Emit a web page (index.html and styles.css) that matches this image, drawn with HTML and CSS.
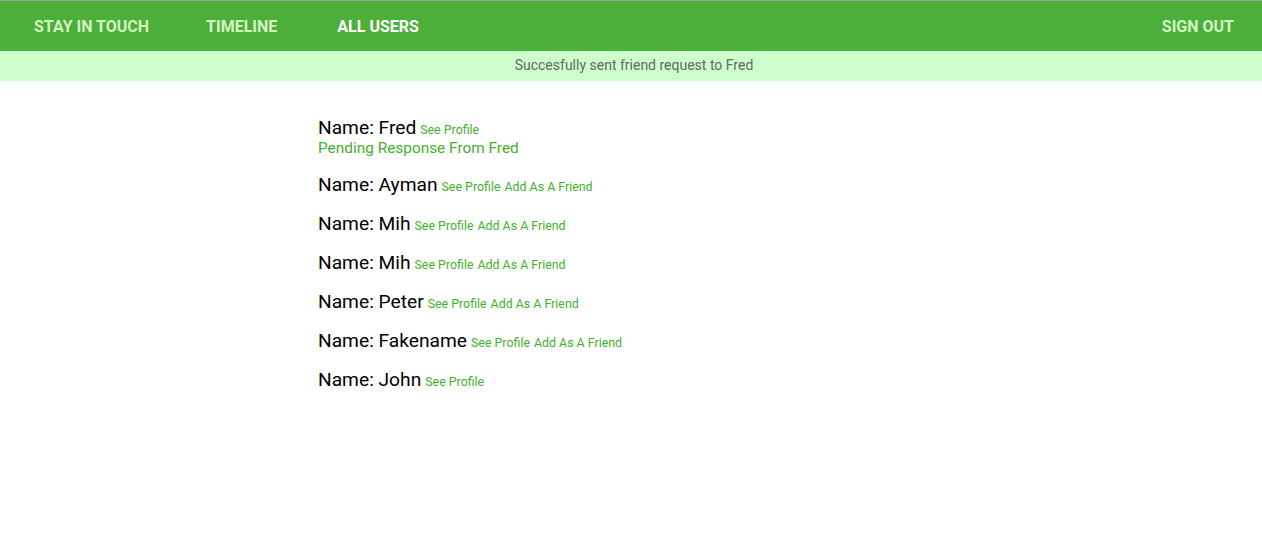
FILE: index.html
```html
<!DOCTYPE html>
<html>
<head>
<meta charset="utf-8">
<link rel="stylesheet" href="styles.css">
</head>
<body>
<div class="topline"></div>
<nav class="nav">
  <div class="nav-left">
    <a class="nav-link">STAY IN TOUCH</a>
    <a class="nav-link nav-link-wide">TIMELINE</a>
    <a class="nav-link active">ALL USERS</a>
  </div>
  <a class="nav-link">SIGN OUT</a>
</nav>
<div class="notice">Succesfully sent friend request to Fred</div>
<main class="users">
  <div class="user">
    <div class="user-line"><span class="name">Name: Fred</span> <a class="link">See Profile</a></div>
    <div class="pending">Pending Response From Fred</div>
  </div>
  <div class="user">
    <div class="user-line"><span class="name">Name: Ayman</span> <a class="link">See Profile</a> <a class="link">Add As A Friend</a></div>
  </div>
  <div class="user">
    <div class="user-line"><span class="name">Name: Mih</span> <a class="link">See Profile</a> <a class="link">Add As A Friend</a></div>
  </div>
  <div class="user">
    <div class="user-line"><span class="name">Name: Mih</span> <a class="link">See Profile</a> <a class="link">Add As A Friend</a></div>
  </div>
  <div class="user">
    <div class="user-line"><span class="name">Name: Peter</span> <a class="link">See Profile</a> <a class="link">Add As A Friend</a></div>
  </div>
  <div class="user">
    <div class="user-line"><span class="name">Name: Fakename</span> <a class="link">See Profile</a> <a class="link">Add As A Friend</a></div>
  </div>
  <div class="user">
    <div class="user-line"><span class="name">Name: John</span> <a class="link">See Profile</a></div>
  </div>
</main>
</body>
</html>
```
FILE: styles.css
```css
html, body {
  margin: 0;
  padding: 0;
  background: #ffffff;
  font-family: Roboto, "Liberation Sans", sans-serif;
}
.topline {
  height: 1px;
  background: #9e9e9e;
}
.nav {
  height: 50px;
  background: #4caf3a;
  display: flex;
  align-items: center;
  justify-content: space-between;
  padding-left: 6px;
}
.nav-left {
  display: flex;
  align-items: center;
}
.nav-link {
  padding: 2px 28px 0;
  color: #d2f5c2;
  font-weight: 700;
  font-size: 16px;
  line-height: 48px;
}
.nav-link-wide {
  padding-left: 29px;
  padding-right: 32px;
}
.nav-link.active {
  color: #ffffff;
}
.notice {
  height: 30px;
  line-height: 28px;
  padding-left: 6px;
  background: #ccffcc;
  color: #666666;
  font-size: 14px;
  text-align: center;
}
.users {
  padding: 36px 0 0 318px;
}
.user {
  margin-bottom: 18px;
}
.user-line {
  height: 21px;
  line-height: 21px;
  white-space: nowrap;
}
.name {
  font-size: 19.2px;
  color: #000000;
}
.link {
  font-size: 12.4px;
  color: #43b02e;
}
.pending {
  font-size: 15.4px;
  line-height: 17px;
  margin-top: 2px;
  margin-bottom: -1px;
  color: #43b02e;
}
```
